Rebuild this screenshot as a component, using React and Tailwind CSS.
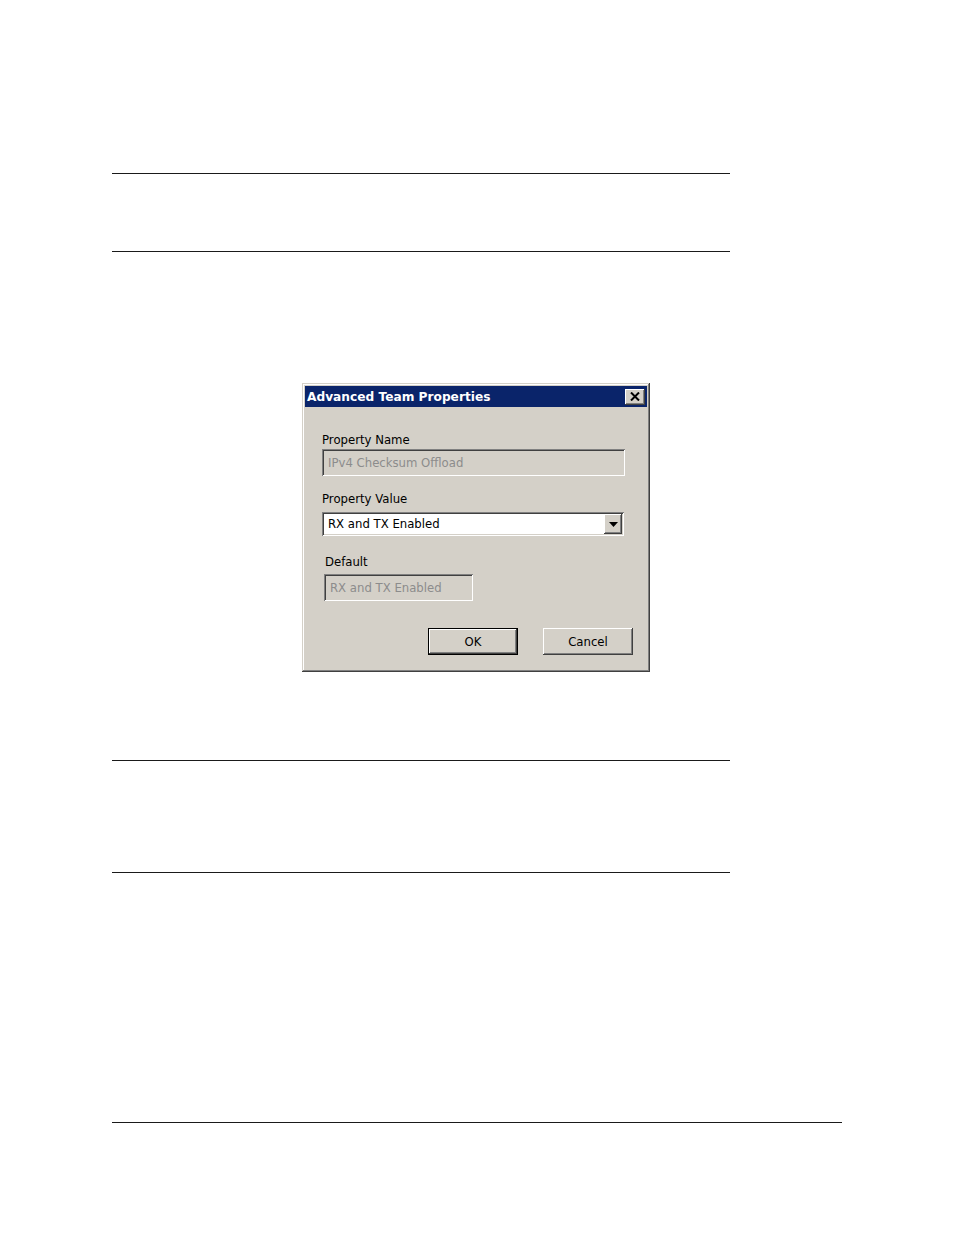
const raised =
  'shadow-[inset_-1px_-1px_#404040,inset_1px_1px_#ffffff,inset_-2px_-2px_#808080,inset_2px_2px_#d4d0c8]';
const sunken =
  'shadow-[inset_1px_1px_#808080,inset_-1px_-1px_#ffffff,inset_2px_2px_#404040,inset_-2px_-2px_#d4d0c8]';

const Rule = ({ w = 'w-[618px]', mt }) => (
  <div className={`ml-[112px] ${w} ${mt} h-px bg-[#1a1a1a]`} />
);

const Field = ({ width, children }) => (
  <div
    className={`${width} h-[27px] ${sunken} bg-[#d4d0c8] flex items-center pl-[6px] pt-px text-[#8c8c8c]`}
  >
    {children}
  </div>
);

const Dialog = () => (
  <div
    className={`ml-[302px] mt-[131px] w-[348px] h-[289px] bg-[#d4d0c8] p-[3px] shadow-[inset_-1px_-1px_#404040,inset_1px_1px_#d4d0c8,inset_-2px_-2px_#808080,inset_2px_2px_#ffffff] text-[11.7px] leading-[15px] text-black`}
    style={{ fontFamily: '"DejaVu Sans", Tahoma, sans-serif' }}
  >
    <div className="h-[21px] bg-[#0a246a] flex items-center justify-between pl-[2px] pr-[2px]">
      <span className="text-white font-bold text-[12.2px] pt-px">Advanced Team Properties</span>
      <div className={`w-[20px] h-[16px] bg-[#d4d0c8] ${raised} flex items-center justify-center`}>
        <svg width="10" height="9" viewBox="0 0 10 9">
          <path d="M1 0.5 L9 8.5 M9 0.5 L1 8.5" stroke="#000" strokeWidth="2" />
        </svg>
      </div>
    </div>

    <div className="pl-[17px]">
      <div className="mt-[26px]">Property Name</div>
      <div className="mt-[1px]">
        <Field width="w-[303px]">IPv4 Checksum Offload</Field>
      </div>

      <div className="mt-[16px]">Property Value</div>
      <div
        className={`mt-[5px] w-[302px] h-[24px] bg-white ${sunken} flex items-center justify-between pl-[6px] pr-[2px]`}
      >
        <span className="pt-px">RX and TX Enabled</span>
        <div className={`w-[18px] h-[20px] bg-[#d4d0c8] ${raised} flex items-center justify-center`}>
          <svg width="9" height="5" viewBox="0 0 9 5">
            <path d="M0 0 H9 L4.5 5 Z" fill="#000" />
          </svg>
        </div>
      </div>

      <div className="mt-[19px] pl-[3px]">Default</div>
      <div className="mt-[4px] pl-[2px]">
        <Field width="w-[149px]">RX and TX Enabled</Field>
      </div>

      <div className="mt-[27px] flex gap-[25px] pl-[106px]">
        <div className="w-[90px] h-[27px] border border-black bg-[#d4d0c8]">
          <div className={`w-full h-full ${raised} flex items-center justify-center pt-px`}>OK</div>
        </div>
        <div className={`w-[90px] h-[27px] bg-[#d4d0c8] ${raised} flex items-center justify-center pt-px`}>
          Cancel
        </div>
      </div>
    </div>
  </div>
);

export default function App() {
  return (
    <div className="relative w-[954px] h-[1235px] bg-white overflow-hidden">
      <Rule mt="mt-[173px]" />
      <Rule mt="mt-[77px]" />
      <Dialog />
      <Rule mt="mt-[88px]" />
      <Rule mt="mt-[111px]" />
      <Rule mt="mt-[249px]" w="w-[730px]" />
    </div>
  );
}
